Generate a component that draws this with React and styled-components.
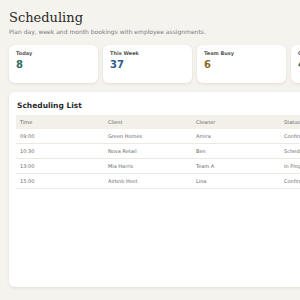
import React from 'react';
import styled, { createGlobalStyle } from 'styled-components';

const GlobalStyle = createGlobalStyle`
  html, body {
    margin: 0;
    padding: 0;
    background: #f5f3ee;
    overflow: hidden;
  }
  body {
    font-family: 'DejaVu Sans', sans-serif;
  }
`;

const stats = [
  { label: 'Today', value: '8', color: '#2f6b5f' },
  { label: 'This Week', value: '37', color: '#2b5b8a' },
  { label: 'Team Busy', value: '6', color: '#8a6a24' },
  { label: 'Open Slots', value: '4', color: '#2f6b5f' },
];

const rows = [
  ['09:00', 'Green Homes', 'Amira', 'Confirmed'],
  ['10:30', 'Nova Retail', 'Ben', 'Scheduled'],
  ['13:00', 'Mia Harris', 'Team A', 'In Progress'],
  ['15:00', 'Airbnb Host', 'Lina', 'Confirmed'],
];

export default function App() {
  return (
    <>
      <GlobalStyle />
      <Page>
        <Title>Scheduling</Title>
        <Subtitle>Plan day, week and month bookings with employee assignments.</Subtitle>
        <Stats>
          {stats.map((s) => (
            <StatCard key={s.label}>
              <StatLabel>{s.label}</StatLabel>
              <StatValue $color={s.color}>{s.value}</StatValue>
            </StatCard>
          ))}
        </Stats>
        <Panel>
          <PanelTitle>Scheduling List</PanelTitle>
          <Table>
            <thead>
              <tr>
                <Th>Time</Th>
                <Th>Client</Th>
                <Th>Cleaner</Th>
                <Th>Status</Th>
              </tr>
            </thead>
            <tbody>
              {rows.map((r) => (
                <tr key={r[0]}>
                  {r.map((c, i) => (
                    <Td key={i}>{c}</Td>
                  ))}
                </tr>
              ))}
            </tbody>
          </Table>
        </Panel>
      </Page>
    </>
  );
}

const Page = styled.div`
  width: 400px;
  padding: 10px 9px 13px;
  box-sizing: border-box;
`;

const Title = styled.h1`
  margin: 0;
  font-family: 'DejaVu Serif', serif;
  font-weight: normal;
  font-size: 13px;
  line-height: 16px;
  color: #2a2a2a;
`;

const Subtitle = styled.p`
  margin: 1px 0 0;
  font-size: 6px;
  line-height: 9px;
  color: #7a7a7a;
`;

const Stats = styled.div`
  display: flex;
  gap: 5px;
  margin-top: 9px;
`;

const StatCard = styled.div`
  flex: 0 0 89px;
  height: 38px;
  box-sizing: border-box;
  padding: 5px 7px;
  background: #fff;
  border-radius: 6px;
  box-shadow: 0 1px 3px rgba(120, 100, 70, 0.15);
`;

const StatLabel = styled.div`
  font-size: 5px;
  font-weight: bold;
  color: #555;
  line-height: 7px;
`;

const StatValue = styled.div`
  margin-top: 2px;
  font-size: 10px;
  font-weight: bold;
  line-height: 12px;
  color: ${(p) => p.$color};
`;

const Panel = styled.div`
  margin-top: 9px;
  height: 195px;
  box-sizing: border-box;
  padding: 8px 7px;
  background: #fff;
  border-radius: 6px;
  box-shadow: 0 1px 3px rgba(120, 100, 70, 0.15);
`;

const PanelTitle = styled.h2`
  margin: 0 0 0 1px;
  font-size: 7.5px;
  font-weight: bold;
  line-height: 11px;
  color: #2a2a2a;
`;

const Table = styled.table`
  margin-top: 4px;
  border-collapse: collapse;
  table-layout: fixed;
  width: 352px;
`;

const Th = styled.th`
  width: 80px;
  height: 14px;
  padding: 0 4px;
  text-align: left;
  font-size: 5px;
  font-weight: normal;
  color: #666;
  background: #f3f0ea;
`;

const Td = styled.td`
  height: 14px;
  padding: 0 4px;
  font-size: 5px;
  color: #6a6a6a;
  border-bottom: 1px solid #ece9e3;
  white-space: nowrap;
  overflow: hidden;
`;
